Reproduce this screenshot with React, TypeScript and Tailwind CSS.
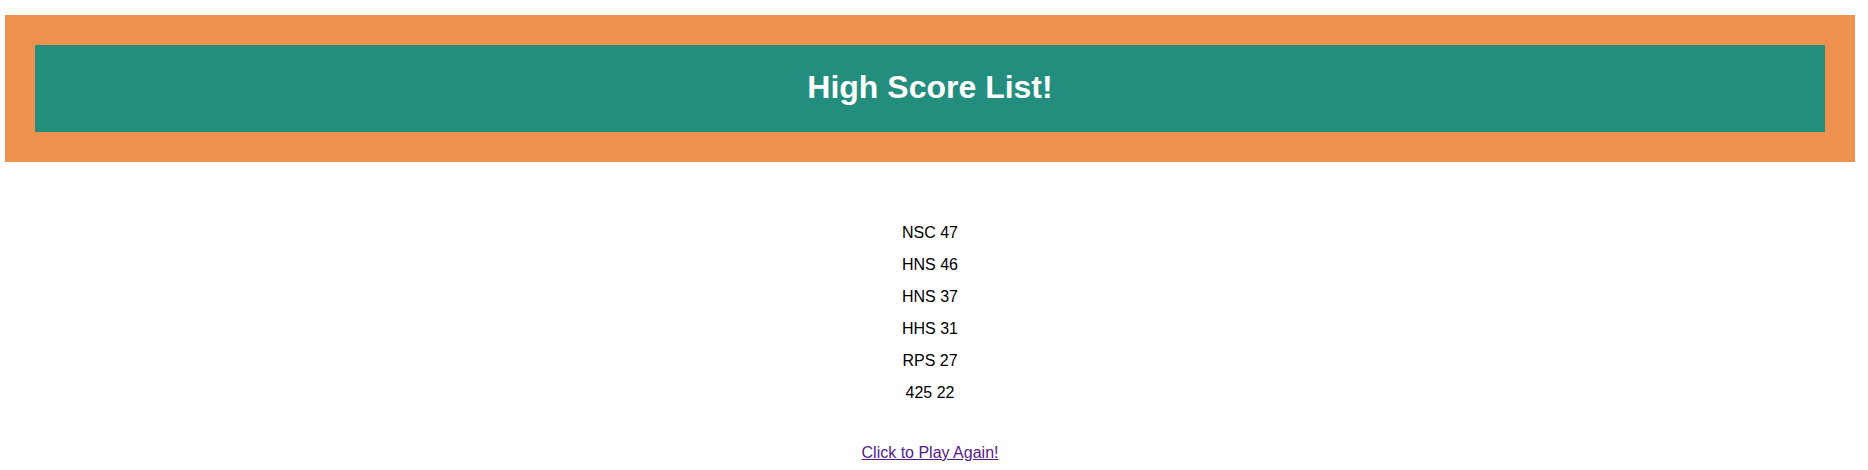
export default function App() {
  const scores = ["NSC 47", "HNS 46", "HNS 37", "HHS 31", "RPS 27", "425 22"];
  return (
    <div className="w-[1850px] ml-[5px] pt-[15px] bg-white" style={{ fontFamily: '"Liberation Sans", Arial, sans-serif' }}>
      <div className="bg-[#ef9250] p-[30px]">
        <div className="bg-[#238e7e] h-[87px] pt-[24px] text-center">
          <h1 className="text-[32px] font-bold text-white leading-[36.8px]">High Score List!</h1>
        </div>
      </div>
      <ul className="mt-[55px] flex flex-col items-center text-[16px] text-black">
        {scores.map((s, i) => (
          <li key={i} className="leading-[32px]">{s}</li>
        ))}
      </ul>
      <div className="mt-[35px] text-center text-[16px] leading-[18.4px]">
        <a href="#" className="text-[#551a8b] underline">Click to Play Again!</a>
      </div>
    </div>
  );
}
